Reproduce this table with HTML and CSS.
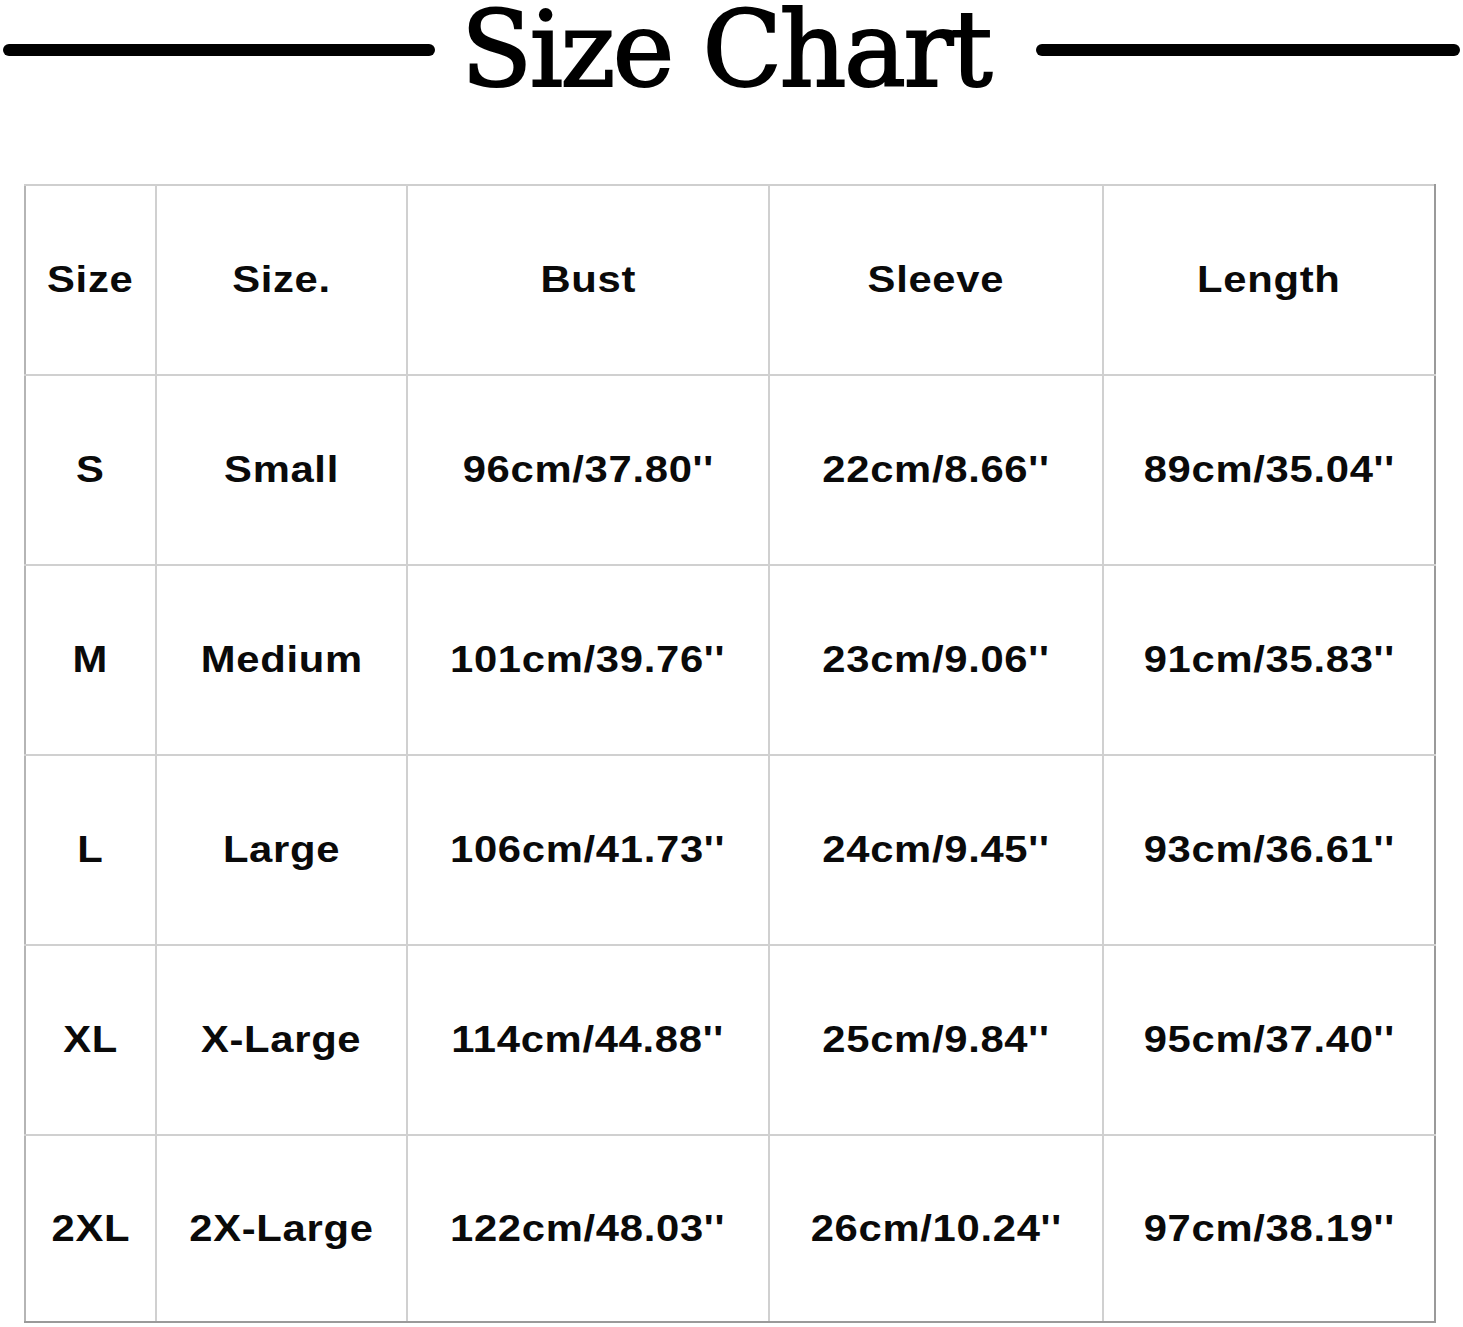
FILE: index.html
```html
<!DOCTYPE html>
<html lang="en">
<head>
<meta charset="utf-8">
<title>Size Chart</title>
<link rel="stylesheet" href="styles.css">
</head>
<body>
<header class="heading">
  <span class="rule rule-left"></span>
  <h1 class="title">Size Chart</h1>
  <span class="rule rule-right"></span>
</header>
<main class="chart-wrap">
  <table class="chart">
    <colgroup>
      <col class="c1"><col class="c2"><col class="c3"><col class="c4"><col class="c5">
    </colgroup>
    <tr><td><span>Size</span></td><td><span>Size.</span></td><td><span>Bust</span></td><td><span>Sleeve</span></td><td><span>Length</span></td></tr>
    <tr><td><span>S</span></td><td><span>Small</span></td><td><span>96cm/37.80''</span></td><td><span>22cm/8.66''</span></td><td><span>89cm/35.04''</span></td></tr>
    <tr><td><span>M</span></td><td><span>Medium</span></td><td><span>101cm/39.76''</span></td><td><span>23cm/9.06''</span></td><td><span>91cm/35.83''</span></td></tr>
    <tr><td><span>L</span></td><td><span>Large</span></td><td><span>106cm/41.73''</span></td><td><span>24cm/9.45''</span></td><td><span>93cm/36.61''</span></td></tr>
    <tr><td><span>XL</span></td><td><span>X-Large</span></td><td><span>114cm/44.88''</span></td><td><span>25cm/9.84''</span></td><td><span>95cm/37.40''</span></td></tr>
    <tr><td><span>2XL</span></td><td><span>2X-Large</span></td><td><span>122cm/48.03''</span></td><td><span>26cm/10.24''</span></td><td><span>97cm/38.19''</span></td></tr>
  </table>
</main>
</body>
</html>
```
FILE: styles.css
```css
html, body {
  margin: 0;
  padding: 0;
  background: #fff;
}

.heading {
  display: flex;
  align-items: center;
  height: 100px;
  padding: 0 3px;
}

.rule {
  display: block;
  height: 12px;
  background: #000;
  border-radius: 6px;
}

.rule-left {
  width: 432px;
  margin-right: 26px;
}

.rule-right {
  flex: 1;
  margin-left: 46px;
}

.title {
  margin: 0;
  font-family: "DejaVu Serif", "Liberation Serif", serif;
  font-weight: normal;
  font-size: 104px;
  line-height: 96px;
  letter-spacing: -2.5px;
  -webkit-text-stroke: 2px #000;
  color: #000;
  white-space: nowrap;
}

.chart-wrap {
  padding: 84px 0 0 24px;
}

.chart {
  border-collapse: collapse;
  table-layout: fixed;
  width: 1410px;
}

.c1 { width: 131px; }
.c2 { width: 251px; }
.c3 { width: 362px; }
.c4 { width: 334px; }
.c5 { width: 332px; }

.chart td {
  height: 188px;
  padding: 0;
  border: 2px solid #d0d0d0;
  text-align: center;
  vertical-align: middle;
  font-family: "Liberation Sans", Arial, sans-serif;
  font-weight: bold;
  font-size: 36px;
  letter-spacing: 0.6px;
  color: #0a0a0a;
}

.chart tr:last-child td { height: 185px; }

.chart td span {
  display: inline-block;
  transform: scaleX(1.16);
  white-space: nowrap;
}

.chart tr:first-child td { border-top-color: #cfcfcf; }
.chart tr:last-child td { border-bottom-color: #9a9a9a; }
.chart td:first-child { border-left-color: #b5b5b5; }
.chart td:last-child { border-right-color: #9a9a9a; }
```
